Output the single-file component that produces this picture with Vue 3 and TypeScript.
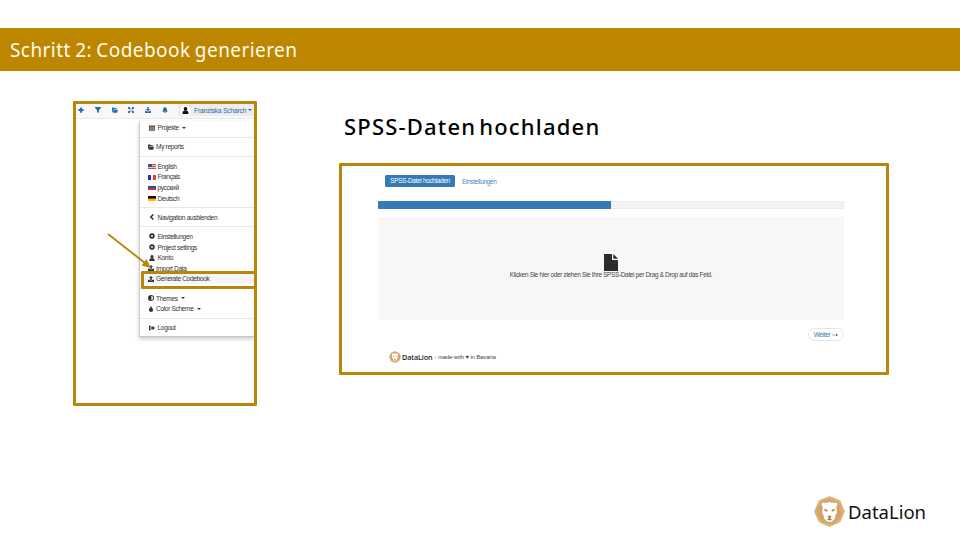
<script setup lang="ts">
interface Item {
  icon: string
  label: string
  caret?: boolean
}

const paths: Record<string, string> = {
  plus: 'M5.500 1h5v4.500H15v5h-4.500V15h-5v-4.500H1v-5h4.500z',
  filter: 'M0 0h16v2L10.500 8.500V16l-5-3V8.500L0 2z',
  folder: 'M0 1h6l1.500 2H13v3H4L1.500 13H0zM4.500 7H16l-2.500 8H1.800z',
  expand: 'M0 0h6L4.300 1.700 7.500 5 5 7.500 1.700 4.300 0 6zM16 0v6l-1.700-1.700L11 7.500 8.500 5l3.200-3.300L10 0zM0 16v-6l1.700 1.700L5 8.500 7.500 11l-3.200 3.300L6 16zM16 16h-6l1.700-1.700L8.500 11 11 8.500l3.300 3.200L16 10z',
  download: 'M6 0h4v5.500h4L8 11 2 5.500h4zM0 10h3l2 2h6l2-2h3v6H0z',
  upload: 'M8 0l5.500 5.500H10V11H6V5.500H2.500zM0 10h5v2h6v-2h5v6H0z',
  bell: 'M7 0h2v1.500c3 .5 4 2.500 4 5.500 0 2 .8 3.500 2.500 5.500H.5C2.200 10.500 3 9 3 7c0-3 1-5 4-5.500zM5.500 13.500h5c0 3-5 3-5 0z',
  user: 'M8 0c3 0 4 2 4 4.500S10.300 9 8 9 4 7 4 4.500 5 0 8 0zM1 16c0-5 1-7 4-7.500 2 1.500 4 1.500 6 0 3 .5 4 2.500 4 7.500z',
  grid: 'M0 1h4.500v4H0zM5.700 1h4.600v4H5.700zM11.500 1H16v4h-4.500zM0 6h4.500v4H0zM5.700 6h4.600v4H5.700zM11.500 6H16v4h-4.500zM0 11h4.500v4H0zM5.700 11h4.600v4H5.700zM11.500 11H16v4h-4.500z',
  left: 'M10 0l3 2.500L7.500 8l5.500 5.500-3 2.500-8-8z',
  cog: 'M6.500 0h3l.5 2.300 2.200-1.300 2.500 2.600L13.500 6l2.500.5v3l-2.500.5 1.200 2.400-2.500 2.500L10 13.600 9.500 16h-3L6 13.600l-2.300 1.300-2.500-2.500L2.500 10 0 9.500v-3L2.500 6 1.200 3.600 3.700 1 6 2.300zM8 5.600a2.400 2.400 0 100 4.800 2.400 2.400 0 000-4.800z',
  adjust: 'M8 0a8 8 0 110 16A8 8 0 018 0zM9 2.200v11.600a6 6 0 000-11.600z',
  tint: 'M8 0c1 4 5.500 6 5.500 10.500a5.500 5.500 0 01-11 0C2.500 6 7 4 8 0z',
  logout: 'M0 2h6v2.500H2.500v7H6V14H0zM9 2l7 6-7 6v-4H4V6h5z',
}

const tools: string[] = ['plus', 'filter', 'folder', 'expand', 'download', 'bell']

const groups: Item[][] = [
  [{ icon: 'grid', label: 'Projekte', caret: true }],
  [{ icon: 'folder', label: 'My reports' }],
  [
    { icon: 'flag-us', label: 'English' },
    { icon: 'flag-fr', label: 'Français' },
    { icon: 'flag-ru', label: 'русский' },
    { icon: 'flag-de', label: 'Deutsch' },
  ],
  [{ icon: 'left', label: 'Navigation ausblenden' }],
  [
    { icon: 'cog', label: 'Einstellungen' },
    { icon: 'cog', label: 'Project settings' },
    { icon: 'user', label: 'Konto' },
    { icon: 'upload', label: 'Import Data' },
    { icon: 'upload', label: 'Generate Codebook' },
  ],
  [
    { icon: 'adjust', label: 'Themes', caret: true },
    { icon: 'tint', label: 'Color Scheme', caret: true },
  ],
  [{ icon: 'logout', label: 'Logout' }],
]

const tight = (label: string): boolean =>
  ['My reports', 'Import Data', 'Generate Codebook', 'Themes', 'Color Scheme'].includes(label)
</script>

<template>
  <main class="slide">
    <header class="banner"><h1>Schritt 2: Codebook generieren</h1></header>

    <div class="content">
      <section class="nav-shot">
        <div class="clip">
          <div class="toolbar">
            <div class="tools">
              <svg v-for="t in tools" :key="t" viewBox="0 0 16 16"><path :d="paths[t]" /></svg>
            </div>
            <div class="account">
              <span class="avatar"><svg viewBox="0 0 16 16"><path :d="paths.user" /></svg></span>
              <span class="name">Franziska Scharch</span>
              <i class="caret"></i>
            </div>
          </div>
          <div class="menu">
            <div v-for="(group, g) in groups" :key="g" class="group">
              <div
                v-for="item in group"
                :key="item.label"
                class="item"
                :class="{ tight: tight(item.label), active: item.label === 'Generate Codebook' }"
              >
                <i v-if="item.icon.startsWith('flag')" class="flag" :class="item.icon"></i>
                <svg v-else viewBox="0 0 16 16"><path fill-rule="evenodd" :d="paths[item.icon]" /></svg>
                <span>{{ item.label }}</span>
                <i v-if="item.caret" class="caret"></i>
              </div>
            </div>
          </div>
        </div>
        <div class="highlight"></div>
        <svg class="arrow" viewBox="0 0 48 40">
          <path d="M2 3L39 32" stroke="#b8860b" stroke-width="1.900" fill="none" />
          <path d="M45 37L35.500 34.500L40.500 28z" fill="#b8860b" />
        </svg>
      </section>

      <section class="upload">
        <h2>SPSS-Daten hochladen</h2>
        <div class="upload-shot">
          <div class="tabs">
            <span class="tab">SPSS-Datei hochladen</span>
            <span class="tab-link">Einstellungen</span>
          </div>
          <div class="progress"><div class="bar"></div></div>
          <div class="drop">
            <svg viewBox="0 0 14 17"><path d="M0 0h8v6h6v11H0zM9.300 0L14 4.800H9.300z" /></svg>
            <p>Klicken Sie hier oder ziehen Sie Ihre SPSS-Datei per Drag &amp; Drop auf das Feld.</p>
          </div>
          <div class="actions">
            <span class="next">Weiter <svg viewBox="0 0 12 8"><path d="M0 3.300h8V1l4 3-4 3V4.700H0z" /></svg></span>
          </div>
          <div class="made">
            <svg class="lion" viewBox="0 0 32 32"><use href="#lion" /></svg>
            <b>DataLion</b><span>- made with ♥ in Bavaria</span>
          </div>
        </div>
      </section>
    </div>

    <footer class="brand">
      <svg class="lion" viewBox="0 0 32 32">
        <defs>
          <radialGradient id="mane">
            <stop offset="0" stop-color="#cf9a52" />
            <stop offset=".7" stop-color="#d5a566" />
            <stop offset="1" stop-color="#e0bd8c" />
          </radialGradient>
          <g id="lion">
            <path d="M16 0L27 4.500L32 16L27 27L16 32L5 27L0 16L5 4.500z" fill="url(#mane)" />
            <path
              d="M8 9.500C7.500 7 10 6 11.500 7.500L13 6.500l1 .7L16 6l2 1.200 1-.7 1.500 1C22 6 24.500 7 24 9.500l-1 2 .7 6-1.500 2-.7 4-1.700 1.500L18 26.500h-4L12.200 25l-1.700-1.500-.7-4-1.500-2 .7-6z"
              fill="#fff"
            />
            <path d="M10.500 13l3.500 1.700-.5 1.500-2.500-1zM21.500 13L18 14.700l.5 1.500 2.500-1zM13.700 20.500h4.600L16.700 23l2 1.300-2.700.9-2.700-.9 2-1.300z" fill="#a87c42" />
          </g>
        </defs>
        <use href="#lion" />
      </svg>
      <span>DataLion</span>
    </footer>
  </main>
</template>

<style>
body {
  margin: 0;
  background: #fff;
}
</style>

<style scoped>
.slide {
  width: 960px;
  height: 540px;
  padding-top: 28px;
  box-sizing: border-box;
  display: flex;
  flex-direction: column;
  background: #fff;
  overflow: hidden;
  font-family: "Liberation Sans", Arial, sans-serif;
}
h1, h2, p {
  margin: 0;
}
svg {
  display: block;
  flex: none;
  fill: currentColor;
}
.banner {
  height: 43px;
  flex: none;
  padding-left: 10px;
  display: flex;
  align-items: center;
  background: #bd8600;
  color: #fffbed;
}
h1 {
  font: 400 19px/28px "Noto Sans", sans-serif;
  letter-spacing: 0.430px;
  word-spacing: -1px;
  white-space: nowrap;
}
.content {
  display: flex;
  gap: 82px;
  align-items: flex-start;
  padding: 30px 0 0 73px;
  height: 395px;
  box-sizing: border-box;
}
.nav-shot {
  position: relative;
  width: 184px;
  height: 305px;
  box-sizing: border-box;
  border: 3px solid #b8860b;
  border-radius: 1px;
}
.clip {
  width: 178px;
  height: 299px;
  overflow: hidden;
  display: flex;
  flex-direction: column;
  align-items: flex-end;
}
.toolbar {
  width: 100%;
  height: 15px;
  flex: none;
  display: flex;
  justify-content: space-between;
  background: #f8f8f8;
  border-bottom: 1px solid #e9e9e9;
  color: #286ba6;
  box-sizing: border-box;
}
.tools {
  display: flex;
  gap: 10.800px;
  padding: 2.500px 0 0 2px;
}
.tools svg {
  width: 6px;
  height: 6px;
}
.account {
  width: 76px;
  box-sizing: border-box;
  padding-left: 2px;
  display: flex;
  align-items: center;
  background: #ededed;
  height: 12px;
  font-size: 6.800px;
  letter-spacing: -0.240px;
  white-space: nowrap;
}
.avatar {
  width: 11px;
  height: 11px;
  border-radius: 50%;
  background: #fff;
  display: grid;
  place-items: center;
  color: #111;
  flex: none;
}
.avatar svg {
  width: 7px;
  height: 7px;
}
.name {
  margin-left: 3px;
}
.caret {
  width: 0;
  height: 0;
  margin-left: 2px;
  border: 2px solid transparent;
  border-top-color: currentColor;
  border-bottom: 0;
  flex: none;
}
.menu {
  width: 115px;
  flex: none;
  margin-top: 2px;
  padding: 1.500px 0 3px;
  border-left: 1px solid #ccc;
  border-bottom: 1px solid #c6c6c6;
  box-shadow: 0 2px 4px rgba(0, 0, 0, 0.22);
  box-sizing: border-box;
  background: #fff;
  color: #333;
}
.group + .group {
  margin-top: 3.900px;
  padding-top: 3.600px;
  border-top: 1px solid #e9e9e9;
}
.item {
  height: 10.660px;
  display: flex;
  align-items: center;
  padding-left: 9px;
  font-size: 6.600px;
  letter-spacing: -0.350px;
  white-space: nowrap;
}
.item svg {
  width: 6px;
  height: 6px;
  margin-right: 2.500px;
}
.item .caret {
  margin-left: 3px;
}
.item.tight {
  padding-left: 8px;
}
.item.tight svg {
  margin-right: 2px;
}
.item.active {
  background: #f5f5f5;
}
.flag {
  width: 8px;
  height: 5px;
  margin: 1px 1.500px 0 -1px;
  flex: none;
}
.flag-us {
  background: linear-gradient(#3c4f8a, #3c4f8a) 0 0 / 4px 3px no-repeat,
    repeating-linear-gradient(#c44d58 0 1px, #e9c4c8 1px 2px);
}
.flag-fr {
  background: linear-gradient(90deg, #25378e 0 34%, #fff 34% 66%, #e63842 66%);
}
.flag-ru {
  background: linear-gradient(#f1f1f1 0 30%, #2c4b9f 30% 70%, #d5303a 70%);
}
.flag-de {
  background: linear-gradient(#111 0 34%, #d51a14 34% 67%, #f5c400 67%);
}
.highlight {
  position: absolute;
  left: 65px;
  top: 167px;
  width: 116px;
  height: 18px;
  box-sizing: border-box;
  border: 3px solid #b8860b;
  border-radius: 1px;
}
.arrow {
  position: absolute;
  left: 30px;
  top: 127px;
  width: 48px;
  height: 40px;
}
.upload {
  width: 550px;
}
h2 {
  height: 62px;
  padding: 9px 0 0 5px;
  box-sizing: border-box;
  font: 500 22px/32px "Noto Sans", sans-serif;
  letter-spacing: 1.200px;
  word-spacing: -4px;
  color: #000;
  white-space: nowrap;
}
.upload-shot {
  height: 212px;
  box-sizing: border-box;
  padding: 9px 42px 0 36px;
  border: 3px solid #b8860b;
  border-radius: 1px;
  font-size: 6.400px;
  letter-spacing: -0.300px;
  color: #444;
}
.tabs {
  display: flex;
  align-items: center;
  padding-left: 7px;
  height: 12px;
  gap: 7px;
}
.tab {
  width: 70px;
  height: 12px;
  border-radius: 1.500px;
  background: #337ab7;
  color: #fff;
  line-height: 12px;
  text-align: center;
  white-space: nowrap;
}
.tab-link {
  color: #4f83b2;
}
.progress {
  height: 8px;
  margin-top: 14px;
  border-radius: 1px;
  background: #f2f2f2;
  box-shadow: inset 0 0 1px #ccc;
}
.bar {
  width: 50%;
  height: 8px;
  border-radius: 1px 0 0 1px;
  background: #337ab7;
}
.drop {
  height: 103px;
  margin-top: 8px;
  padding-top: 37px;
  box-sizing: border-box;
  display: flex;
  flex-direction: column;
  align-items: center;
  background: #f7f7f7;
}
.drop svg {
  width: 14px;
  height: 17px;
  color: #2b2b2b;
}
.drop p {
  line-height: 7px;
  white-space: nowrap;
}
.actions {
  display: flex;
  justify-content: flex-end;
  margin-top: 8px;
}
.next {
  width: 36px;
  height: 13px;
  box-sizing: border-box;
  border: 1px solid #e4e4e4;
  border-radius: 7px;
  display: flex;
  align-items: center;
  justify-content: center;
  gap: 2px;
  color: #3c76ab;
  white-space: nowrap;
}
.next svg {
  width: 6px;
  height: 4px;
}
.made {
  display: flex;
  align-items: center;
  margin-top: 10px;
  padding-left: 11px;
  height: 12px;
  font-size: 6px;
  letter-spacing: -0.150px;
}
.made .lion {
  width: 12px;
  height: 12px;
}
.made b {
  margin: 0 2px 0 1px;
  font: 500 7.300px/10px "Noto Sans", sans-serif;
  letter-spacing: -0.100px;
  color: #111;
}
.brand {
  display: flex;
  align-items: center;
  gap: 3px;
  margin-top: 30px;
  padding-left: 814px;
  height: 31px;
  font: 400 18.500px/28px "Noto Sans", sans-serif;
  color: #111;
}
.brand .lion {
  width: 31px;
  height: 31px;
}
</style>
